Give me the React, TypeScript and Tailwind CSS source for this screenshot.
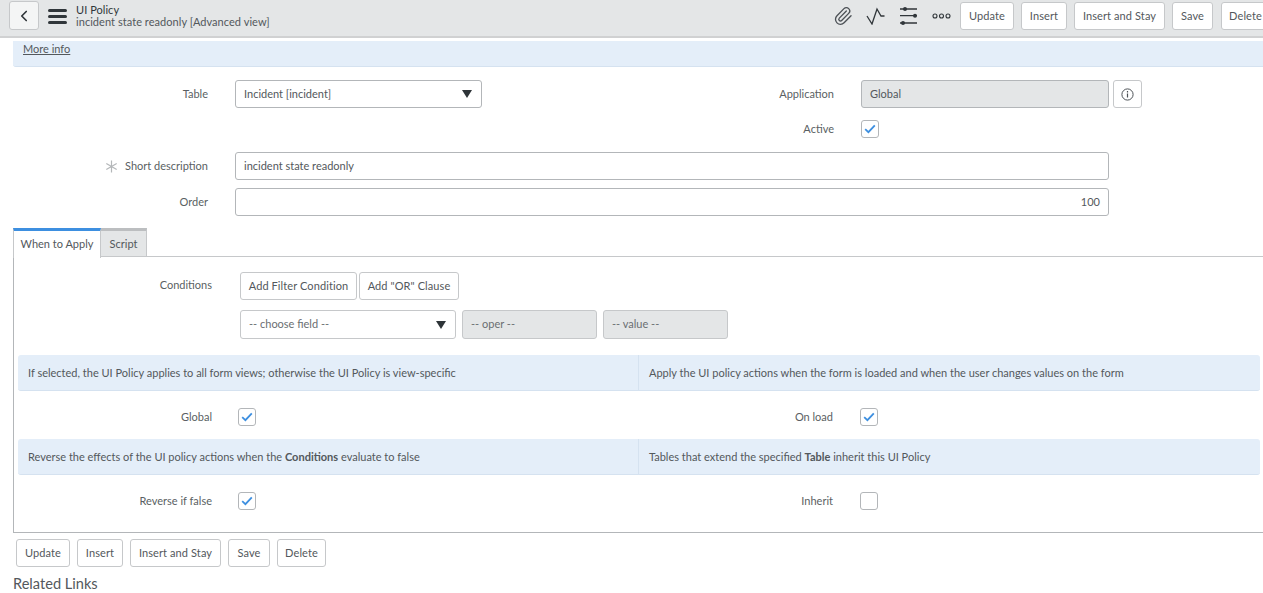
import React from "react";
import { ChevronLeft, Paperclip } from "lucide-react";

const FONT = "font-['Lato','Noto_Sans',sans-serif]";

function Btn({ children, className = "" }: { children: React.ReactNode; className?: string }) {
  return (
    <button className={`h-7 shrink-0 rounded-[3px] border border-[#c6c8ca] bg-white text-[11px] tracking-[0.1px] text-[#53585c] ${className}`}>
      {children}
    </button>
  );
}

function Check({ checked = true }: { checked?: boolean }) {
  return (
    <span className="flex h-[18px] w-[18px] shrink-0 items-center justify-center rounded-[3px] border border-[#b3b6b9] bg-white">
      {checked && (
        <svg width="12" height="10" viewBox="0 0 12 10" fill="none">
          <path d="M1.2 5.2 4.4 8.2 10.8 1.4" stroke="#3d8fe0" strokeWidth="1.8" />
        </svg>
      )}
    </span>
  );
}

function Caret() {
  return (
    <svg width="10" height="8" viewBox="0 0 10 8">
      <path d="M0 0h10L5 8z" fill="#2e3438" />
    </svg>
  );
}

function Label({ children, className = "" }: { children: React.ReactNode; className?: string }) {
  return <span className={`text-right text-[11px] text-[#5a5f63] ${className}`}>{children}</span>;
}

function Hint({ left, right }: { left: React.ReactNode; right: React.ReactNode }) {
  return (
    <div className="grid h-9 w-[1242px] grid-cols-2 rounded-[3px] border-b border-[#d5e2f0] bg-[#e4eef9] text-[11px] text-[#53585c]">
      <div className="flex items-center border-r border-[#d5e2f0] pl-[10px] pt-px">
        <span>{left}</span>
      </div>
      <div className="flex items-center pl-[10px] pt-px">
        <span>{right}</span>
      </div>
    </div>
  );
}

function CheckRow({ left, right, rightChecked = true, className = "" }: { left: string; right: string; rightChecked?: boolean; className?: string }) {
  return (
    <div className={`flex h-[18px] items-center ${className}`}>
      <Label className="w-[194px] pt-px">{left}</Label>
      <span className="ml-[26px]">
        <Check />
      </span>
      <Label className="w-[577px] pt-px">{right}</Label>
      <span className="ml-[27px]">
        <Check checked={rightChecked} />
      </span>
    </div>
  );
}

export default function App() {
  return (
    <div className={`h-[593px] w-[1263px] overflow-hidden bg-white ${FONT}`}>
      <header className="flex h-[38px] items-start border-b-2 border-[#d0d1d2] bg-[#e4e6e7]">
        <button className="ml-[9px] mt-px flex h-[29px] w-[30px] items-center justify-center rounded-[3px] border border-[#c6c8ca] bg-[#f4f5f5]">
          <ChevronLeft size={18} strokeWidth={2.2} className="text-[#2e3438]" />
        </button>
        <div className="ml-[9px] mt-[9px] flex w-[19px] flex-col gap-[3px]">
          <span className="h-[3px] rounded-sm bg-[#30363a]" />
          <span className="h-[3px] rounded-sm bg-[#30363a]" />
          <span className="h-[3px] rounded-sm bg-[#30363a]" />
        </div>
        <div className="ml-[9px] mt-[4px] text-[11px] leading-[12px] tracking-[0.05px] text-[#53585c]">
          <div className="text-[#30363a]">UI Policy</div>
          <div>incident state readonly [Advanced view]</div>
        </div>
        <div className="-mr-[7px] ml-auto mt-[2px] flex items-center">
          <Paperclip size={20} strokeWidth={1.6} className="mr-[13px] text-[#4c5156]" />
          <svg width="19" height="18" viewBox="0 0 19 18" fill="none" className="mr-[14px]">
            <path d="M1 9l5 8L11 2l4 7h3.5" stroke="#30363a" strokeWidth="1.3" />
          </svg>
          <svg width="19" height="18" viewBox="0 0 19 18" fill="none" className="mr-[14px]">
            <path d="M1 2h17M1 8.7h17M1 16h17" stroke="#30363a" strokeWidth="1.3" />
            <circle cx="6" cy="2" r="2" fill="#30363a" />
            <circle cx="16" cy="8.7" r="2" fill="#30363a" />
            <circle cx="4" cy="16" r="2" fill="#30363a" />
          </svg>
          <svg width="19" height="6" viewBox="0 0 19 6" fill="none" className="mr-[9px]">
            <circle cx="3" cy="3" r="2" stroke="#30363a" strokeWidth="1.1" />
            <circle cx="9.5" cy="3" r="2" stroke="#30363a" strokeWidth="1.1" />
            <circle cx="16" cy="3" r="2" stroke="#30363a" strokeWidth="1.1" />
          </svg>
          <Btn className="w-[54px] bg-[#f4f5f5]">Update</Btn>
          <Btn className="ml-[7px] w-[46px] bg-[#f4f5f5]">Insert</Btn>
          <Btn className="ml-[7px] w-[91px] bg-[#f4f5f5]">Insert and Stay</Btn>
          <Btn className="ml-[7px] w-[41px] bg-[#f4f5f5]">Save</Btn>
          <Btn className="ml-[8px] w-[49px] bg-[#f4f5f5]">Delete</Btn>
        </div>
      </header>

      <div className="ml-[13px] mt-[3px] h-[26px] rounded-bl-[3px] border-b border-[#d5e2f0] bg-[#e4eef9] pl-[10px] text-[11px] leading-[16px] text-[#53585c]">
        <a className="underline">More info</a>
      </div>

      <div className="mt-[13px] grid grid-cols-[208px_27px_247px_352px_27px_1fr] items-center">
        <Label>Table</Label>
        <span />
        <div className="flex h-[28px] items-center justify-between rounded-[3px] border border-[#b3b6b9] pl-2 pr-[9px] text-[11px] text-[#53585c]">
          Incident [incident]
          <Caret />
        </div>
        <Label>Application</Label>
        <span />
        <div className="flex items-center gap-1">
          <div className="flex h-[28px] w-[248px] items-center rounded-[3px] border border-[#b3b6b9] bg-[#e4e6e7] pl-2 pt-px text-[11px] text-[#53585c]">
            Global
          </div>
          <button className="flex h-[28px] w-[29px] items-center justify-center rounded-[3px] border border-[#c6c8ca] bg-white">
            <svg width="13" height="13" viewBox="0 0 13 13" fill="none">
              <circle cx="6.5" cy="6.5" r="5.6" stroke="#4c5156" strokeWidth="1" />
              <path d="M6.5 5.6v4M6.5 3v1.4" stroke="#4c5156" strokeWidth="1.2" />
            </svg>
          </button>
        </div>
      </div>

      <div className="mt-[12px] flex items-center justify-end pr-[384px]">
        <Label className="mr-[27px]">Active</Label>
        <Check />
      </div>

      <div className="mt-[14px] flex items-center">
        <div className="flex w-[208px] items-center justify-end">
          <svg width="13" height="13" viewBox="0 0 13 13" fill="none" className="mr-[7px]">
            <path d="M6.5 0.5v12M1.3 3.5l10.4 6M11.7 3.5l-10.4 6" stroke="#b4b7b9" strokeWidth="1.2" />
          </svg>
          <Label>Short description</Label>
        </div>
        <div className="ml-[27px] flex h-[28px] w-[874px] items-center rounded-[3px] border border-[#b3b6b9] pl-2 text-[11px] text-[#53585c]">
          incident state readonly
        </div>
      </div>

      <div className="mt-[8px] flex items-center">
        <Label className="w-[208px]">Order</Label>
        <div className="ml-[27px] flex h-[28px] w-[874px] items-center justify-end rounded-[3px] border border-[#b3b6b9] pr-2 text-[11px] text-[#53585c]">
          100
        </div>
      </div>

      <div className="ml-[13px] mt-[12px]">
        <div className="flex h-[29px] items-stretch">
          <div className="relative z-10 -mb-px flex w-[88px] items-center justify-center border-x border-t-[3px] border-[#c6c8ca] border-t-[#3d8fe0] bg-white text-[11px] text-[#53585c]">
            When to Apply
          </div>
          <div className="flex w-[46px] items-center justify-center border-r border-b border-t-[3px] border-[#c6c8ca] border-t-[#bcbec0] bg-[#e4e6e7] pt-px text-[11px] text-[#53585c]">
            Script
          </div>
          <div className="flex-1 border-b border-[#c6c8ca]" />
        </div>

        <div className="h-[276px] border-b border-l border-[#b3b6b9] pl-[4px] pt-[15px]">
          <div className="flex">
            <Label className="mt-[5px] w-[194px]">Conditions</Label>
            <div className="ml-[28px] flex flex-col gap-[10px]">
              <div className="flex gap-[2px]">
                <Btn className="w-[117px]">Add Filter Condition</Btn>
                <Btn className="w-[100px]">Add "OR" Clause</Btn>
              </div>
              <div className="flex gap-[6px]">
                <div className="flex h-[29px] w-[216px] items-center justify-between rounded-[3px] border border-[#c6c8ca] pl-2 pr-[9px] text-[11px] text-[#6a6e72]">
                  -- choose field --
                  <Caret />
                </div>
                <div className="flex h-[29px] w-[135px] items-center rounded-[3px] border border-[#c6c8ca] bg-[#e4e6e7] pl-2 text-[11px] text-[#6a6e72]">
                  -- oper --
                </div>
                <div className="flex h-[29px] w-[125px] items-center rounded-[3px] border border-[#c6c8ca] bg-[#e4e6e7] pl-2 text-[11px] text-[#6a6e72]">
                  -- value --
                </div>
              </div>
            </div>
          </div>

          <div className="mt-[16px]">
            <Hint
              left="If selected, the UI Policy applies to all form views; otherwise the UI Policy is view-specific"
              right="Apply the UI policy actions when the form is loaded and when the user changes values on the form"
            />
          </div>

          <CheckRow left="Global" right="On load" className="mt-[17px]" />

          <div className="mt-[13px]">
            <Hint
              left={
                <>
                  Reverse the effects of the UI policy actions when the <b className="font-bold">Conditions</b> evaluate to false
                </>
              }
              right={
                <>
                  Tables that extend the specified <b className="font-bold">Table</b> inherit this UI Policy
                </>
              }
            />
          </div>

          <CheckRow left="Reverse if false" right="Inherit" rightChecked={false} className="mt-[17px]" />
        </div>
      </div>

      <div className="ml-4 mt-[6px] flex gap-[7px]">
        <Btn className="w-[54px]">Update</Btn>
        <Btn className="w-[46px]">Insert</Btn>
        <Btn className="w-[91px]">Insert and Stay</Btn>
        <Btn className="w-[42px]">Save</Btn>
        <Btn className="w-[49px]">Delete</Btn>
      </div>
      <div className="ml-[13px] mt-[7px] text-[14.6px] leading-5 text-[#53585c]">Related Links</div>
    </div>
  );
}
